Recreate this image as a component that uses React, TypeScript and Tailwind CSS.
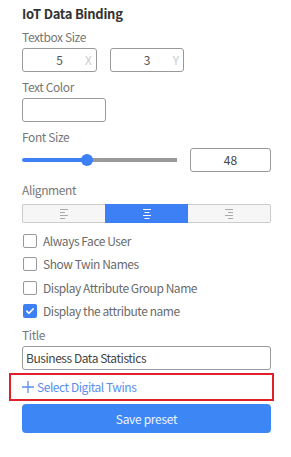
const font = { fontFamily: '"Noto Sans CJK SC", "Noto Sans", sans-serif' }

function AlignIcon({ mode, color }: { mode: 'left' | 'center' | 'right'; color: string }) {
  // four short lines, widths alternate like a text-align glyph
  const rows = [
    { y: 0.5, w: 8 },
    { y: 3.5, w: 5 },
    { y: 6.5, w: 8 },
    { y: 9.5, w: 5 },
  ]
  return (
    <svg width="8" height="10" viewBox="0 0 8 10">
      {rows.map((r) => {
        const x = mode === 'left' ? 0 : mode === 'center' ? (8 - r.w) / 2 : 8 - r.w
        return <line key={r.y} x1={x} x2={x + r.w} y1={r.y} y2={r.y} stroke={color} strokeWidth="1" />
      })}
    </svg>
  )
}

function CheckRow({ label, checked }: { label: string; checked?: boolean }) {
  return (
    <div className="flex items-center h-[23.5px]">
      {checked ? (
        <div className="w-[14px] h-[14px] rounded-[2px] bg-[#3d7ff5] flex items-center justify-center">
          <svg width="10" height="10" viewBox="0 0 10 10">
            <path d="M1.8 5.2 L4 7.3 L8.3 2.8" fill="none" stroke="#fff" strokeWidth="1.6" strokeLinecap="round" strokeLinejoin="round" />
          </svg>
        </div>
      ) : (
        <div className="w-[14px] h-[14px] rounded-[2px] border border-[#999] bg-white" />
      )}
      <span className="ml-[6px] text-[12px] text-[#6b6b6b] tracking-[-0.45px]">{label}</span>
    </div>
  )
}

export default function App() {
  return (
    <div className="w-[291px] h-[457px] bg-white pl-[22px] pr-[20px] pt-[4px]" style={font}>
      <h1 className="text-[13px] font-bold text-[#333] leading-[20px] tracking-[-0.25px]">IoT Data Binding</h1>

      <div className="mt-[4px] text-[12px] text-[#777] leading-[18px] tracking-[-0.4px]">Textbox Size</div>
      <div className="mt-[2px] flex gap-[13px]">
        <div className="relative w-[75px] h-[24px] border border-[#999] rounded-[3px] flex items-center">
          <span className="flex-1 text-center text-[12px] text-[#555]">5</span>
          <span className="absolute right-[4px] text-[12px] text-[#ccc]">X</span>
        </div>
        <div className="relative w-[74px] h-[24px] border border-[#999] rounded-[3px] flex items-center">
          <span className="flex-1 text-center text-[12px] text-[#555]">3</span>
          <span className="absolute right-[4px] text-[12px] text-[#ccc]">Y</span>
        </div>
      </div>

      <div className="mt-[6px] text-[12px] text-[#777] leading-[18px] tracking-[-0.4px]">Text Color</div>
      <div className="mt-[2px] w-[84px] h-[24px] border border-[#999] rounded-[3px]" />

      <div className="mt-[6px] text-[12px] text-[#777] leading-[18px] tracking-[-0.4px]">Font Size</div>
      <div className="mt-[2px] flex items-center h-[24px]">
        <div className="relative w-[155px] h-[24px] flex items-center">
          <div className="w-[65px] h-[4px] bg-[#3d7ff5] rounded-l-full" />
          <div className="flex-1 h-[4px] bg-[#999]" />
          <div className="absolute left-[59px] top-[6px] w-[12px] h-[12px] rounded-full bg-[#3d7ff5]" />
        </div>
        <div className="ml-[13px] w-[81px] h-[24px] border border-[#999] rounded-[3px] flex items-center justify-center text-[12px] text-[#444]">
          48
        </div>
      </div>

      <div className="mt-[9px] text-[12px] text-[#777] leading-[18px] tracking-[-0.4px]">Alignment</div>
      <div className="mt-[5px] flex h-[19px] w-[249px]">
        <div className="flex-1 flex items-center justify-center bg-[#f6f6f6] border border-[#ccc] border-r-0 rounded-l-[2px]">
          <AlignIcon mode="left" color="#aaa" />
        </div>
        <div className="w-[83px] flex items-center justify-center bg-[#3d7ff5]">
          <AlignIcon mode="center" color="#fff" />
        </div>
        <div className="flex-1 flex items-center justify-center bg-[#f6f6f6] border border-[#ccc] border-l-0 rounded-r-[2px]">
          <AlignIcon mode="right" color="#aaa" />
        </div>
      </div>

      <div className="mt-[6px] pl-[1px]">
        <CheckRow label="Always Face User" />
        <CheckRow label="Show Twin Names" />
        <CheckRow label="Display Attribute Group Name" />
        <CheckRow label="Display the attribute name" checked />
      </div>

      <div className="mt-[3px] text-[12px] text-[#777] leading-[18px] tracking-[-0.4px]">Title</div>
      <div className="mt-[2px] w-[249px] h-[24px] border border-[#999] rounded-[3px] flex items-center px-[3px] text-[12px] text-[#444] tracking-[-0.45px]">
        Business Data Statistics
      </div>

      <div className="-ml-[13px] mt-[3px] w-[265px] h-[28px] border-2 border-[#e0202a] flex items-center pl-[11px] text-[#5b8def]">
        <svg width="12" height="12" viewBox="0 0 12 12">
          <path d="M6 0 V12 M0 6 H12" stroke="currentColor" strokeWidth="1.3" />
        </svg>
        <span className="ml-[3px] text-[12px] tracking-[-0.45px]">Select Digital Twins</span>
      </div>

      <button className="mt-[3px] w-[249px] h-[29px] rounded-[4px] bg-[#3d86f5] text-white/90 text-[12px] tracking-[-0.3px]">
        Save preset
      </button>
    </div>
  )
}
